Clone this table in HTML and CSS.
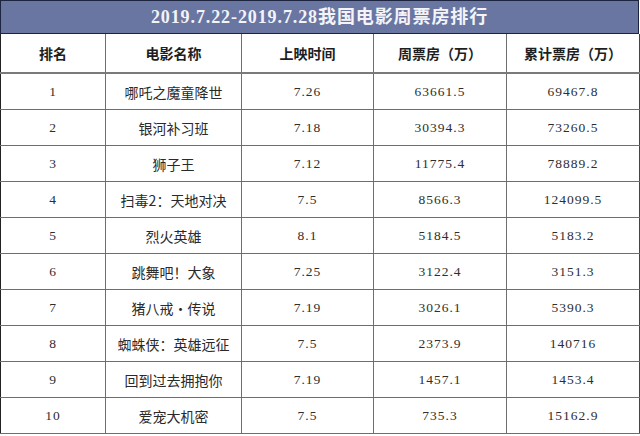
FILE: index.html
```html
<!DOCTYPE html>
<html lang="zh-CN">
<head>
<meta charset="utf-8">
<link rel="stylesheet" href="styles.css">
</head>
<body>
<div class="sheet">
  <div class="title">2019.7.22-2019.7.28我国电影周票房排行</div>
  <table class="rank">
    <colgroup>
      <col class="c1"><col class="c2"><col class="c3"><col class="c4"><col class="c5">
    </colgroup>
    <thead>
      <tr><th>排名</th><th>电影名称</th><th>上映时间</th><th>周票房（万）</th><th>累计票房（万）</th></tr>
    </thead>
    <tbody>
      <tr><td class="num">1</td><td>哪吒之魔童降世</td><td class="num">7.26</td><td class="num">63661.5</td><td class="num">69467.8</td></tr>
      <tr><td class="num">2</td><td>银河补习班</td><td class="num">7.18</td><td class="num">30394.3</td><td class="num">73260.5</td></tr>
      <tr><td class="num">3</td><td>狮子王</td><td class="num">7.12</td><td class="num">11775.4</td><td class="num">78889.2</td></tr>
      <tr><td class="num">4</td><td>扫毒2：天地对决</td><td class="num">7.5</td><td class="num">8566.3</td><td class="num">124099.5</td></tr>
      <tr><td class="num">5</td><td>烈火英雄</td><td class="num">8.1</td><td class="num">5184.5</td><td class="num">5183.2</td></tr>
      <tr><td class="num">6</td><td>跳舞吧！大象</td><td class="num">7.25</td><td class="num">3122.4</td><td class="num">3151.3</td></tr>
      <tr><td class="num">7</td><td>猪八戒·传说</td><td class="num">7.19</td><td class="num">3026.1</td><td class="num">5390.3</td></tr>
      <tr><td class="num">8</td><td>蜘蛛侠：英雄远征</td><td class="num">7.5</td><td class="num">2373.9</td><td class="num">140716</td></tr>
      <tr><td class="num">9</td><td>回到过去拥抱你</td><td class="num">7.19</td><td class="num">1457.1</td><td class="num">1453.4</td></tr>
      <tr><td class="num">10</td><td>爱宠大机密</td><td class="num">7.5</td><td class="num">735.3</td><td class="num">15162.9</td></tr>
    </tbody>
  </table>
</div>
</body>
</html>
```

FILE: styles.css
```css
html, body {
  margin: 0;
  padding: 0;
  background: #ffffff;
}

.sheet {
  width: 639px;
}

.title {
  box-sizing: border-box;
  height: 34px;
  line-height: 32px;
  background: #6a76a2;
  border: 1px solid #1c2440;
  color: #f4f4f8;
  text-align: center;
  font-family: "Liberation Serif", "Noto Sans CJK SC", serif;
  font-size: 18px;
  font-weight: bold;
  letter-spacing: 0.9px;
}

.rank {
  width: 639px;
  border-collapse: collapse;
  table-layout: fixed;
  font-family: "Noto Sans CJK SC", sans-serif;
  color: #2a2a2a;
}

.c1 { width: 105px; }
.c2 { width: 136px; }
.c3 { width: 132px; }
.c4 { width: 133px; }
.c5 { width: 133px; }

.rank th,
.rank td {
  border: 1px solid #6e6e6e;
  text-align: center;
  padding: 0;
  overflow: hidden;
  white-space: nowrap;
}

.rank th {
  height: 38px;
  font-size: 14px;
  font-weight: bold;
  color: #1e1e1e;
  border-top: 0;
  border-bottom: 2px solid #7a7a7a;
}

.rank td {
  height: 35px;
  font-size: 14px;
  font-weight: normal;
}

.rank td.num {
  font-family: "Liberation Serif", serif;
  font-size: 13.5px;
  letter-spacing: 1px;
  color: #2e2e2e;
}

.rank tr > :first-child {
  border-left: 1px solid #222;
}

.rank tr > :last-child {
  border-right: 1px solid #444;
}
```
